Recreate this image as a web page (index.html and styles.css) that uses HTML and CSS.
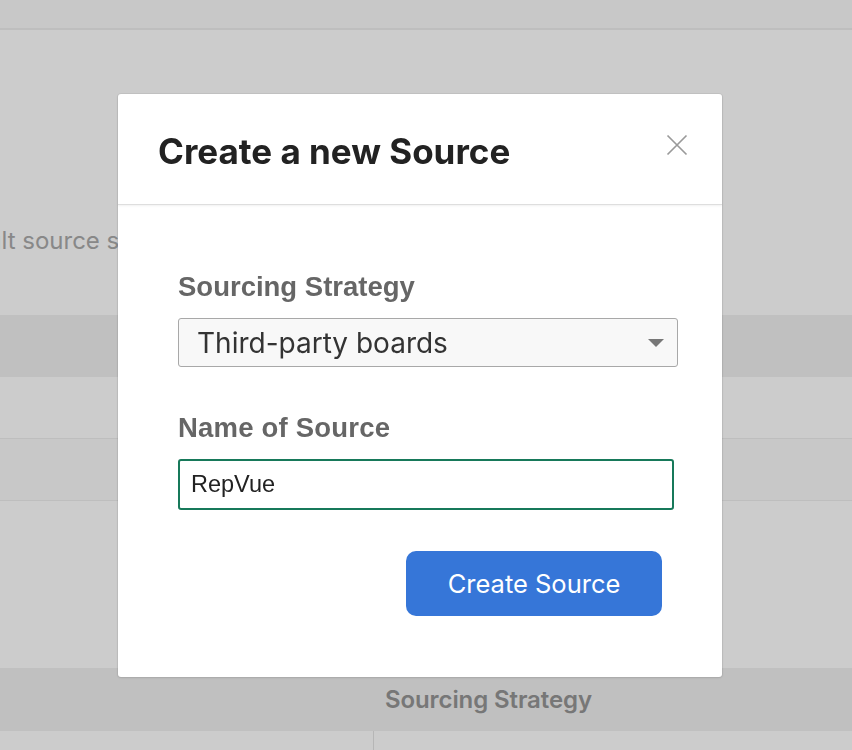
FILE: index.html
```html
<!DOCTYPE html>
<html lang="en">

<head>
    <meta charset="UTF-8">
    <meta name="viewport" content="width=device-width, initial-scale=1.0">
    <title>Sources</title>
    <link rel="stylesheet" href="styles.css">
</head>

<body>
    <div class="page">
        <div class="topbar"></div>
        <section class="intro">
            <p class="intro-text">Default source strategy for new candidates</p>
        </section>

        <div class="table">
            <div class="table-head"></div>
            <div class="table-row"></div>
            <div class="table-row alt"></div>
        </div>

        <div class="spacer"></div>

        <div class="table two-col">
            <div class="table-head">
                <span></span>
                <span class="head-cell">Sourcing Strategy</span>
            </div>
            <div class="table-row last">
                <span class="cell"></span>
                <span class="cell"></span>
            </div>
        </div>
    </div>

    <div class="backdrop"></div>

    <div class="modal" role="dialog">
        <div class="modal-header">
            <h2>Create a new Source</h2>
            <button class="close" type="button" aria-label="Close">
                <svg width="22" height="22" viewBox="0 0 22 22">
                    <path d="M1.5 1.5 L20.5 20.5 M20.5 1.5 L1.5 20.5" stroke="#9a9a9a" stroke-width="1.7" fill="none" />
                </svg>
            </button>
        </div>

        <form class="modal-body">
            <label class="field-label" for="strategy">Sourcing Strategy</label>
            <div class="select-wrap">
                <select id="strategy" class="select">
                    <option>Third-party boards</option>
                </select>
                <span class="caret"></span>
            </div>

            <label class="field-label second" for="sourceName">Name of Source</label>
            <input id="sourceName" class="text-input" type="text" value="RepVue">

            <div class="actions">
                <button class="primary" type="button">Create Source</button>
            </div>
        </form>
    </div>
</body>

</html>
```

FILE: styles.css
```css
body {
    font-family: 'Inter', 'Liberation Sans', sans-serif;
    margin: 0;
    padding: 0;
    background-color: white;
    overflow: hidden;
}

.page {
    width: 852px;
}

.topbar {
    height: 28px;
    background-color: #fafafa;
    border-bottom: 2px solid #eeeeee;
}

.intro {
    height: 285px;
    box-sizing: border-box;
    padding-top: 196px;
    overflow: hidden;
}

.intro-text {
    margin: 0 0 0 -66px;
    font-size: 24px;
    line-height: 30px;
    color: #aaaaaa;
    white-space: nowrap;
}

.table-head {
    height: 62px;
    background-color: #f0f0f0;
}

.table-row {
    height: 61px;
    border-bottom: 1px solid #eeeeee;
}

.table-row.alt {
    background-color: #fafafa;
}

.spacer {
    height: 167px;
}

.two-col .table-head,
.two-col .table-row {
    display: grid;
    grid-template-columns: 373px 1fr;
}

.two-col .table-head {
    height: 63px;
    align-items: center;
}

.two-col .table-row.last {
    height: 19px;
    border-bottom: none;
}

.head-cell {
    padding-left: 12px;
    font-size: 24px;
    font-weight: 600;
    letter-spacing: -0.1px;
    color: #959595;
}

.two-col .cell + .cell {
    border-left: 1px solid #e4e4e4;
}

/* modal */
.backdrop {
    position: fixed;
    inset: 0;
    background-color: rgba(0, 0, 0, 0.2);
}

.modal {
    position: fixed;
    left: 118px;
    top: 94px;
    width: 604px;
    background-color: white;
    border-radius: 3px;
    box-shadow: 0 0 0 1px rgba(0, 0, 0, 0.05), 0 1px 3px rgba(0, 0, 0, 0.1);
}

.modal-header {
    height: 111px;
    box-sizing: border-box;
    padding: 0 34px 0 40px;
    display: flex;
    align-items: center;
    justify-content: space-between;
    border-bottom: 1px solid #dedede;
    box-shadow: 0 1px 2px rgba(0, 0, 0, 0.06);
}

.modal-header h2 {
    margin: 0;
    font-size: 35px;
    font-weight: 700;
    letter-spacing: 0;
    color: #222222;
    padding-top: 4px;
}

.close {
    border: none;
    background: none;
    padding: 0;
    width: 22px;
    height: 22px;
    margin-top: -9px;
    cursor: pointer;
}

.close svg {
    display: block;
}

.modal-body {
    padding: 67px 60px 61px;
    display: flex;
    flex-direction: column;
}

.field-label {
    font-family: 'Liberation Sans', Arial, sans-serif;
    font-size: 27.5px;
    line-height: 30px;
    font-weight: 700;
    color: #666666;
    margin-bottom: 16px;
}

.field-label.second {
    margin-top: 46px;
    letter-spacing: 0.2px;
}

.select-wrap {
    position: relative;
    width: 500px;
}

.select {
    appearance: none;
    -webkit-appearance: none;
    display: block;
    width: 100%;
    height: 49px;
    box-sizing: border-box;
    padding: 0 40px 0 18px;
    font-family: 'Inter', sans-serif;
    font-size: 28px;
    color: #333333;
    background-color: #f8f8f8;
    border: 1.5px solid #a8a8a8;
    border-radius: 3px;
}

.caret {
    position: absolute;
    right: 14px;
    top: 21px;
    width: 0;
    height: 0;
    border-left: 8px solid transparent;
    border-right: 8px solid transparent;
    border-top: 8px solid #777777;
}

.text-input {
    width: 496px;
    height: 51px;
    box-sizing: border-box;
    padding: 0 11px;
    font-family: 'Liberation Sans', Arial, sans-serif;
    font-size: 23.5px;
    color: #222222;
    border: 2px solid #17795a;
    border-radius: 3px;
    outline: none;
}

.actions {
    display: flex;
    justify-content: flex-end;
    margin-top: 41px;
}

.primary {
    width: 256px;
    height: 65px;
    border: none;
    border-radius: 10px;
    background-color: #3676d8;
    color: white;
    font-family: 'Inter', sans-serif;
    font-size: 25.5px;
    cursor: pointer;
}
```
